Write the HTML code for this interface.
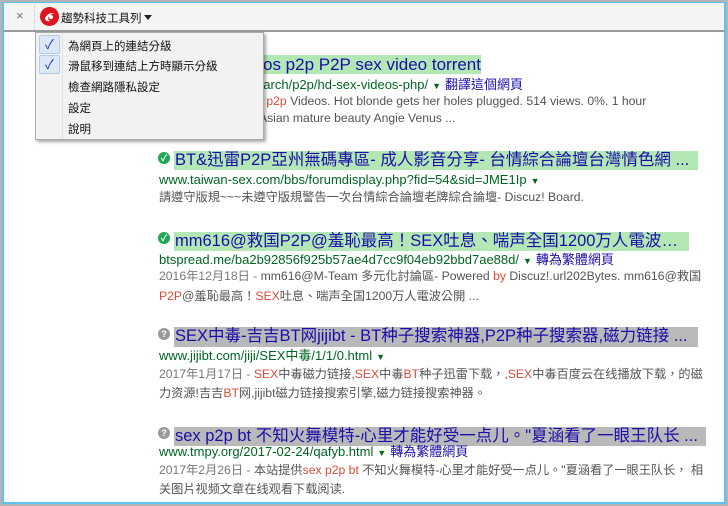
<!DOCTYPE html>
<html><head><meta charset="utf-8"><style>
*{margin:0;padding:0;box-sizing:border-box}
body{width:728px;height:506px;overflow:hidden;background:#fff;font-family:"Liberation Sans","Noto Sans CJK TC",sans-serif;position:relative}
.frame{position:absolute;left:0;top:0;width:728px;height:506px;border:2px solid #b4b4b4;border-top-width:2px}
.fb{position:absolute;left:2px;top:2px;right:2px;bottom:2px;border:2px solid #5cc2f0;border-top-width:1px}
.tb{position:absolute;left:4px;top:3px;right:4px;height:29px;background:#f4f4f4;border-bottom:2px solid #9a9a9a}
.abs{position:absolute;white-space:nowrap}
.t{font-size:16.5px;color:#1a0dab;height:19px;line-height:19px;overflow:hidden;text-overflow:ellipsis;padding-left:1px}
.g{background:#b3e8b5}.gr{background:#b9b9b9}
.u{font-size:13px;color:#006621;line-height:15px}
.u .a{color:#006621;font-size:9px;margin:0 4px}
.u .tr{color:#1a0dab;font-size:13px}
.s{font-size:12.2px;color:#545454;line-height:16px}
.r{color:#dd4b39}.d{color:#777}
.ic{width:12px;height:12px;border-radius:50%;color:#fff;font-size:9px;line-height:12px;text-align:center;font-weight:bold}
.menu{position:absolute;left:35px;top:32px;width:229px;height:108px;background:#f2f2f2;border:1px solid #aaa;box-shadow:2px 2px 3px rgba(0,0,0,.35)}
.mi{position:absolute;left:32px;font-size:11.5px;color:#111}
.ck{position:absolute;left:3px;width:21px;height:19px;background:#dce8f5;border:1px solid #b5cbe6;border-radius:2px;color:#2233aa;font-size:13px;text-align:center;line-height:17px}
</style></head><body>
<div class="frame"></div><div class="fb"></div>
<div class="tb"></div>
<div class="abs" style="left:16px;top:8px;font-size:13px;color:#777">×</div>
<div class="abs" style="left:34px;top:5px;height:25px;border-left:1px dotted #c8c8c8"></div>
<div class="abs" style="left:40px;top:7px;width:19px;height:19px;border-radius:50%;background:#e0141e"></div>
<svg class="abs" style="left:40px;top:7px" width="19" height="19" viewBox="0 0 19 19"><path d="M5 11 Q9 4 15 7 Q12 6 9 9 Q7 12 10 14 Q5 15 5 11Z" fill="#fff"/><circle cx="11" cy="10" r="2" fill="#fff"/></svg>
<div class="abs" style="left:61px;top:10px;font-size:11.5px;color:#111">趨勢科技工具列</div>
<div class="abs" style="left:144px;top:15px;width:0;height:0;border-left:4px solid transparent;border-right:4px solid transparent;border-top:5px solid #222"></div>

<!-- result 1 -->
<div class="abs" style="right:247px;top:55px"><div class="t g" style="font-size:17px">Free hd sex videos p2p P2P sex video torrent</div></div>
<div class="abs u" style="left:160px;top:77px">www.xnxx.com/search/p2p/hd-sex-videos-php/<span class="a">▼</span><span class="tr">翻譯這個網頁</span></div>
<div class="abs s" style="left:160px;top:93px">Free hd se<span class="r">x</span> videos <span class="r">p2p</span> Videos. Hot blonde gets her holes plugged. 514 views. 0%. 1 hour</div>
<div class="abs s" style="left:160px;top:110px">Asian videos <span class="r">p2p</span>. Asian mature beauty Angie Venus ...</div>

<div class="menu">
<div class="ck" style="top:2px">✓</div><div class="mi" style="top:5px">為網頁上的連結分級</div>
<div class="ck" style="top:22px">✓</div><div class="mi" style="top:25px">滑鼠移到連結上方時顯示分級</div>
<div class="mi" style="top:46px">檢查網路隱私設定</div>
<div class="mi" style="top:67px">設定</div>
<div class="mi" style="top:88px">說明</div>
<div class="abs" style="left:26px;top:0;height:106px;border-left:1px solid #e2e2e2"></div>
</div>

<!-- result 2 -->
<div class="abs ic" style="left:158px;top:152px;background:#1ea853">✓</div>
<div class="abs t g" style="left:174px;top:151px;width:524px">BT&amp;迅雷P2P亞州無碼專區- 成人影音分享- 台情綜合論壇台灣情色網 ...</div>
<div class="abs u" style="left:159px;top:172px">www.taiwan-sex.com/bbs/forumdisplay.php?fid=54&amp;sid=JME1Ip<span class="a">▼</span></div>
<div class="abs s" style="left:159px;top:189px">請遵守版規~~~未遵守版規警告一次台情綜合論壇老牌綜合論壇- Discuz! Board.</div>

<!-- result 3 -->
<div class="abs ic" style="left:158px;top:232px;background:#1ea853">✓</div>
<div class="abs t g" style="left:174px;top:232px;width:515px">mm616@救国P2P@羞恥最高！SEX吐息、喘声全国1200万人電波公開</div>
<div class="abs u" style="left:159px;top:252px">btspread.me/ba2b92856f925b57ae4d7cc9f04eb92bbd7ae88d/<span class="a">▼</span><span class="tr">轉為繁體網頁</span></div>
<div class="abs s" style="left:159px;top:268px"><span class="d">2016年12月18日 - </span>mm616@M-Team 多元化討論區- Powered <span class="r">by</span> Discuz!.url202Bytes. mm616@救国</div>
<div class="abs s" style="left:159px;top:288px"><span class="r">P2P</span>@羞恥最高！<span class="r">SEX</span>吐息、喘声全国1200万人電波公開 ...</div>

<!-- result 4 -->
<div class="abs ic" style="left:158px;top:328px;background:#9a9a9a">?</div>
<div class="abs t gr" style="left:174px;top:327px;width:524px;height:20px">SEX中毒-吉吉BT网jijibt - BT种子搜索神器,P2P种子搜索器,磁力链接 ...</div>
<div class="abs u" style="left:159px;top:348px">www.jijibt.com/jiji/SEX中毒/1/1/0.html<span class="a">▼</span></div>
<div class="abs s" style="left:159px;top:366px"><span class="d">2017年1月17日 - </span><span class="r">SEX</span>中毒磁力链接,<span class="r">SEX</span>中毒<span class="r">BT</span>种子迅雷下载，,<span class="r">SEX</span>中毒百度云在线播放下载，的磁</div>
<div class="abs s" style="left:159px;top:385px">力资源!吉吉<span class="r">BT</span>网,jijibt磁力链接搜索引擎,磁力链接搜索神器。</div>

<!-- result 5 -->
<div class="abs ic" style="left:158px;top:427px;background:#9a9a9a">?</div>
<div class="abs t gr" style="left:174px;top:427px;width:532px">sex p2p bt 不知火舞模特-心里才能好受一点儿。"夏涵看了一眼王队长 ...</div>
<div class="abs u" style="left:159px;top:444px">www.tmpy.org/2017-02-24/qafyb.html<span class="a">▼</span><span class="tr">轉為繁體網頁</span></div>
<div class="abs s" style="left:159px;top:462px"><span class="d">2017年2月26日 - </span>本站提供<span class="r">sex p2p bt</span> 不知火舞模特-心里才能好受一点儿。"夏涵看了一眼王队长， 相</div>
<div class="abs s" style="left:159px;top:481px">关图片视频文章在线观看下载阅读.</div>
</body></html>
